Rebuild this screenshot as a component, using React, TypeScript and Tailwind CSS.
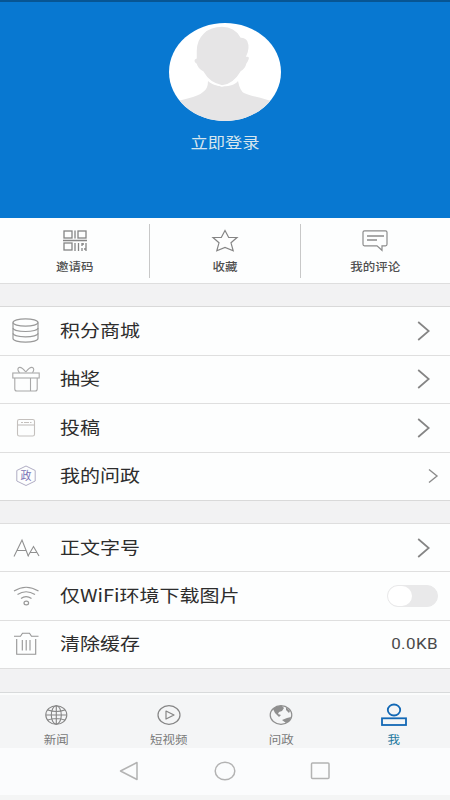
import React from "react";

const rowText =
  "-mt-[2px] origin-left scale-y-[0.88] whitespace-nowrap text-[20px] leading-none text-[#2d2d2d]";

function Coins() {
  return (
    <svg width="28" height="28" viewBox="0 0 28 28" fill="none" stroke="#999" strokeWidth="1.2">
      <ellipse cx="13.500" cy="5.500" rx="12.500" ry="3.700" />
      <path d="M1 5.500v16c0 2 5.600 3.700 12.500 3.700S26 23.500 26 21.500V5.500" />
      <path d="M1 11c0 2 5.600 3.500 12.500 3.500S26 13 26 11M1 16.300c0 2 5.600 3.500 12.500 3.500s12.500-1.500 12.500-3.500" />
    </svg>
  );
}

function GiftBox() {
  return (
    <svg width="28" height="28" viewBox="0 0 28 28" fill="none" stroke="#a8a8a8" strokeWidth="1.1">
      <rect x="0.800" y="8" width="26.400" height="5" />
      <path d="M2.800 13v11q0 2 2 2h18.400q2 0 2-2V13M18.500 13v13" />
      <path d="M13.800 7Q9.500 1.500 7 2.500Q4.500 4 7.500 7.800M13.800 7Q18 1.500 20.500 2.500Q23 4 20.500 7.800" />
    </svg>
  );
}

function Draft() {
  return (
    <svg width="28" height="28" viewBox="0 0 28 28" fill="none" stroke="#c4c0bd" strokeWidth="1.100">
      <rect x="5.500" y="5.500" width="17" height="16.500" rx="1.800" />
      <path d="M5.500 11h17" />
      <path d="M9 8.500h2M12 8.500h5M18 8.500h1.500" />
    </svg>
  );
}

function PolicyBadge() {
  return (
    <span className="relative flex h-7 w-7 items-center justify-center">
      <svg className="absolute" width="28" height="28" viewBox="0 0 28 28" fill="none" stroke="#b0adc4" strokeWidth="1">
        <path d="M14 4l9.200 4.500v10.500L14 23.500 4.800 19V8.500z" />
      </svg>
      <span className="-mt-px text-[11px] leading-none text-[#7a72b5]">政</span>
    </span>
  );
}

function FontSize() {
  return (
    <svg width="28" height="28" viewBox="0 0 28 28" fill="none" stroke="#909090" strokeWidth="1.100">
      <path d="M2 22.500L10 6l6.500 16.500M5 16.500h9.300" />
      <path d="M16 22L21.500 12.500l5.500 9.500M17.800 18.500h7.400" />
    </svg>
  );
}

function Wifi() {
  return (
    <svg width="28" height="28" viewBox="0 0 28 28" fill="none" stroke="#999" strokeWidth="1.200">
      <path d="M2 9Q14 1.500 26.500 9M5.500 12.500Q14 7 23 12.500M9 16.500Q14 12.800 19.500 16.500" />
      <ellipse cx="14.300" cy="21" rx="2.300" ry="1.900" />
    </svg>
  );
}

function Trash() {
  return (
    <svg width="28" height="28" viewBox="0 0 28 28" fill="none" stroke="#959595" strokeWidth="1.100">
      <path d="M2 6.200h6.500l2-3h7l2 3h7" />
      <path d="M4.700 9v15.300h19V9M10.300 10v10.500M14.200 10v10.500M18 10v10.500" />
    </svg>
  );
}

function Arrow({ small }: { small?: boolean }) {
  if (small) {
    return (
      <svg className="mr-[11px]" width="11" height="16" viewBox="0 0 11 16" fill="none" stroke="#8c8c8c" strokeWidth="1.400">
        <path d="M1 1.500l8 6.500-8 6.500" />
      </svg>
    );
  }
  return (
    <svg className="mr-[19px]" width="14" height="20" viewBox="0 0 14 20" fill="none" stroke="#858585" strokeWidth="1.700">
      <path d="M1.200 1l10.500 9-10.500 9" />
    </svg>
  );
}

function Row({ icon, title, right }: {
  icon: React.ReactNode;
  title: string;
  right: React.ReactNode;
}) {
  return (
    <div className="flex flex-1 items-center">
      <div className="ml-3 mr-5 w-7">{icon}</div>
      <div className={rowText}>{title}</div>
      <div className="ml-auto">{right}</div>
    </div>
  );
}

function Shortcut({ title, children, last }: {
  title: string;
  children: React.ReactNode;
  last?: boolean;
}) {
  return (
    <div className={"mt-[6px] flex h-[54px] flex-1 flex-col items-center border-[#c8c8c8] " + (last ? "" : "border-r")}>
      <div className="mt-[5px] h-6">{children}</div>
      <div className="mt-[7px] scale-y-90 text-[12.5px] font-medium leading-[13px] text-[#505050]">{title}</div>
    </div>
  );
}

function Tab({ title, children, active }: {
  title: string;
  children: React.ReactNode;
  active?: boolean;
}) {
  return (
    <div className="flex flex-1 flex-col items-center">
      <div className="mt-[7px] h-[26px]">{children}</div>
      <div className={"mt-[5px] scale-y-90 text-[12.5px] leading-[13px] " + (active ? "text-[#23789f]" : "text-[#7a7a7a]")}>
        {title}
      </div>
    </div>
  );
}

export default function App() {
  return (
    <div className="flex h-[800px] w-[450px] flex-col overflow-hidden bg-[#f2f2f3] font-['Noto_Sans_CJK_SC',sans-serif]">
      <div className="flex h-[218px] flex-col items-center border-t-2 border-[#075593] bg-[#0878d1]">
        <svg className="mt-5" width="114" height="101" viewBox="0 0 114 101">
          <defs>
            <clipPath id="face">
              <ellipse cx="57" cy="50" rx="56" ry="49" />
            </clipPath>
          </defs>
          <ellipse cx="57" cy="50" rx="56" ry="49" fill="#fff" />
          <g clipPath="url(#face)" fill="#e6e5e6">
            <path d="M0 82C13 77 29 76 35 70Q40 67 40 59C47 66 65 66 70 59Q72 69 76 71C84 75 100 76 114 84V101H0Z" />
            <path
              d="M54 4C39 4 28 14 28 29L28 36C25 37 25 40 28 42Q30 48 35 50C40 59 46 62 54 64C62 63 69 57 73 50Q78 47 79 42C83 36 82 34 79 34Q83 26 80 19Q78 15 73 15Q67 4 54 4Z"
              stroke="#fff"
              strokeWidth="1.5"
            />
          </g>
        </svg>
        <div className="mt-[10px] scale-y-[0.88] text-[17.3px] leading-[18px] text-[#d6e6ee]">立即登录</div>
      </div>

      <div className="flex h-[66px] border-b border-[#dedede] bg-[#fdfefe]">
        <Shortcut title="邀请码">
          <svg width="26" height="24" viewBox="0 0 26 24" fill="none" stroke="#858585" strokeWidth="1.3">
            <rect x="2" y="2" width="8" height="7" />
            <rect x="16" y="2" width="8" height="7" />
            <rect x="2" y="14" width="8" height="7" />
            <path d="M13 1.500v8M1 11.500h24M13 14v8M16.500 14v8M20 14v3M20 19v3M24 14v8M20 15h2M22 20h2" />
          </svg>
        </Shortcut>
        <Shortcut title="收藏">
          <svg width="28" height="24" viewBox="0 0 28 24" fill="none" stroke="#858585" strokeWidth="1.2">
            <path d="M14 1.500l3.700 7h8.300l-6 5.300 2.200 8L14 18.500 5.800 21.800l2.200-8L2 8.500h8.300z" />
          </svg>
        </Shortcut>
        <Shortcut title="我的评论" last>
          <svg width="28" height="24" viewBox="0 0 28 24" fill="none" stroke="#8c8c8c" strokeWidth="1.2">
            <path d="M3.500 1.800h21q1.500 0 1.500 1.500v12q0 1.500-1.500 1.500H21v4.500l-5-4.500H3.500Q2 16.800 2 15.300v-12q0-1.500 1.500-1.500z" />
            <path d="M6 7h17M6 11h10" strokeWidth="1.500" />
          </svg>
        </Shortcut>
      </div>

      <div className="mt-[22px] flex h-[195px] flex-col divide-y divide-[#dfdfdf] border-y border-[#d9d9d9] bg-[#fdfefe]">
        <Row icon={<Coins />} title="积分商城" right={<Arrow />} />
        <Row icon={<GiftBox />} title="抽奖" right={<Arrow />} />
        <Row icon={<Draft />} title="投稿" right={<Arrow />} />
        <Row icon={<PolicyBadge />} title="我的问政" right={<Arrow small />} />
      </div>

      <div className="mt-[22px] flex h-[146px] flex-col divide-y divide-[#dfdfdf] border-y border-[#dedede] bg-[#fdfefe]">
        <Row icon={<FontSize />} title="正文字号" right={<Arrow />} />
        <Row
          icon={<Wifi />}
          title="仅WiFi环境下载图片"
          right={
            <div className="mr-3 h-[22px] w-[51px] rounded-full border border-[#e9e9ea] bg-[#e9e9ea]">
              <div className="h-5 w-6 rounded-full bg-white"></div>
            </div>
          }
        />
        <Row
          icon={<Trash />}
          title="清除缓存"
          right={
            <div className="mr-[12px] origin-right scale-y-[0.9] font-['Roboto',sans-serif] text-[17px] leading-none tracking-[0.4px] text-[#4a4a4a]">
              0.0KB
            </div>
          }
        />
      </div>

      <div className="mt-auto flex h-[56px] border-t border-[#d8dadb] bg-[#f4f5f6]">
        <div className="flex flex-1 border-t-2 border-[#fbfcfc]">
          <Tab title="新闻">
            <svg width="26" height="26" viewBox="0 0 26 26" fill="none" stroke="#858585" strokeWidth="1.1">
              <ellipse cx="13.300" cy="13" rx="10.500" ry="9.300" />
              <ellipse cx="13.300" cy="13" rx="5" ry="9.300" />
              <path d="M13.300 3.700v18.600M2.800 13h21M4.800 8q8.500 3 17 0M4.800 18q8.500-3 17 0" />
            </svg>
          </Tab>
          <Tab title="短视频">
            <svg width="26" height="26" viewBox="0 0 26 26" fill="none" stroke="#858585" strokeWidth="1.200">
              <ellipse cx="13" cy="13" rx="11" ry="9.300" />
              <path d="M10 9l8 4-8 4z" strokeLinejoin="round" />
            </svg>
          </Tab>
          <Tab title="问政">
            <svg width="26" height="26" viewBox="0 0 26 26" fill="none" stroke="#8f8f8f" strokeWidth="1.200">
              <ellipse cx="13" cy="13" rx="10.800" ry="9.300" />
              <path
                d="M5 7Q9 3 14 4l2 2-2 3-3 1-1 2 3 1-2 2-4-4zM14 18l5-2 4-1q-1 4-5 6z M18 5l4 4-1 2-3-3z"
                fill="#8f8f8f"
                stroke="none"
              />
            </svg>
          </Tab>
          <Tab title="我" active>
            <svg width="26" height="26" viewBox="0 0 26 26" fill="none" stroke="#1268b5" strokeWidth="1.800">
              <ellipse cx="13" cy="8" rx="6.200" ry="5.500" />
              <rect x="1" y="16.300" width="24" height="6.700" />
            </svg>
          </Tab>
        </div>
      </div>

      <div className="flex h-[47px] bg-[#fbfcfd] pl-[117px] pt-[11px]">
        <svg width="220" height="24" viewBox="0 0 220 24" fill="none" stroke="#b3b3b3" strokeWidth="1.500">
          <path d="M3.500 12L20 3.500v17z" strokeLinejoin="round" />
          <ellipse cx="108" cy="12" rx="9.800" ry="8.800" />
          <rect x="194.500" y="4" width="17.500" height="15.500" rx="1" />
        </svg>
      </div>
      <div className="h-[5px] shrink-0 bg-[#f4f5f5]"></div>
    </div>
  );
}
